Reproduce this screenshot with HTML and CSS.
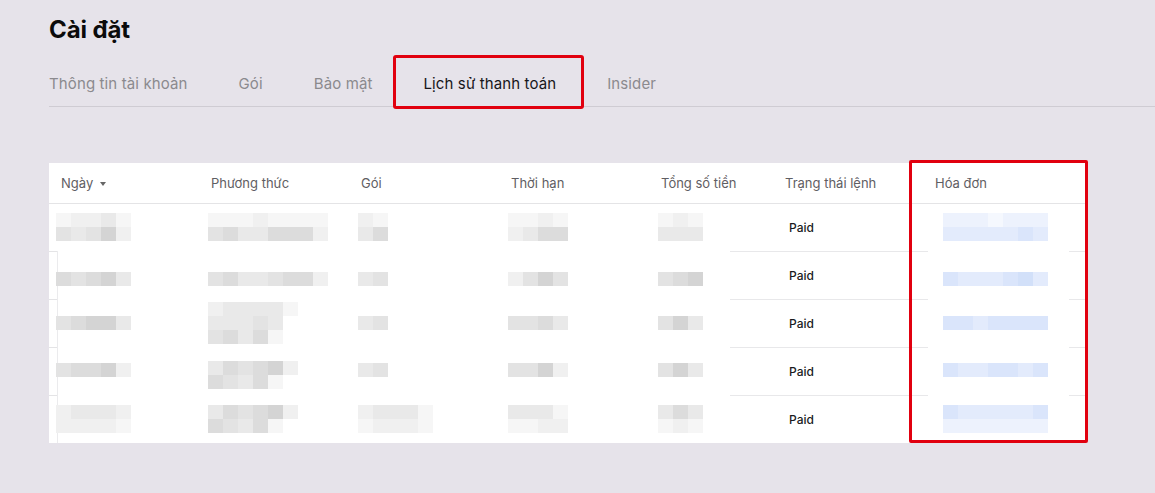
FILE: index.html
```html
<!DOCTYPE html>
<html lang="vi">
<head>
<meta charset="utf-8">
<title>Cài đặt</title>
<link rel="stylesheet" href="styles.css">
</head>
<body>
<main class="page">
  <h1 class="title">Cài đặt</h1>
  <nav class="tabs">
    <span class="tab">Thông tin tài khoản</span>
    <span class="tab">Gói</span>
    <span class="tab">Bảo mật</span>
    <span class="tab active">Lịch sử thanh toán</span>
    <span class="tab">Insider</span>
  </nav>

  <section class="table-wrap">
    <table class="history">
      <colgroup>
        <col class="w150"><col class="w150"><col class="w150"><col class="w150"><col class="w124"><col class="w150"><col class="w164">
      </colgroup>
      <thead>
        <tr>
          <th>Ngày <span class="caret"></span></th>
          <th>Phương thức</th>
          <th>Gói</th>
          <th>Thời hạn</th>
          <th>Tổng số tiền</th>
          <th>Trạng thái lệnh</th>
          <th class="inv-h">Hóa đơn</th>
        </tr>
      </thead>
      <tbody>
        <tr>
          <td class="c-date"><div class="mz m-date"><div class="mr"><i class="c1"></i><i class="c2"></i><i class="c2"></i><i class="c3"></i><i class="c1"></i></div><div class="mr"><i class="c4"></i><i class="c3"></i><i class="c4"></i><i class="c6"></i><i class="c2"></i></div></div></td>
          <td class="c-pay"><div class="mz"><div class="mr"><i class="c1"></i><i class="c1"></i><i class="c1"></i><i class="c2"></i><i class="c1"></i><i class="c1"></i><i class="c1"></i><i class="c1"></i></div><div class="mr"><i class="c4"></i><i class="c5"></i><i class="c3"></i><i class="c3"></i><i class="c5"></i><i class="c5"></i><i class="c5"></i><i class="c2"></i></div></div></td>
          <td class="c-plan"><div class="mz"><div class="mr"><i class="c2"></i><i class="c1"></i></div><div class="mr"><i class="c3"></i><i class="c5"></i></div></div></td>
          <td class="c-term"><div class="mz"><div class="mr"><i class="c1"></i><i class="c1"></i><i class="c2"></i><i class="c1"></i></div><div class="mr"><i class="c2"></i><i class="c3"></i><i class="c5"></i><i class="c5"></i></div></div></td>
          <td class="c-total"><div class="mz"><div class="mr"><i class="c1"></i><i class="c2"></i><i class="c1"></i></div><div class="mr"><i class="c3"></i><i class="c3"></i><i class="c3"></i></div></div></td>
          <td class="c-status">Paid</td>
          <td class="c-inv"><div class="mz m-inv"><div class="mr"><i class="b1"></i><i class="b1"></i><i class="b1"></i><i class="b0"></i><i class="b1"></i><i class="b1"></i><i class="b1"></i></div><div class="mr"><i class="b2"></i><i class="b2"></i><i class="b2"></i><i class="b2"></i><i class="b2"></i><i class="b3"></i><i class="b2"></i></div></div></td>
        </tr>
        <tr>
          <td class="c-date"><div class="mz m-date lower"><div class="mr"><i class="c5"></i><i class="c4"></i><i class="c5"></i><i class="c6"></i><i class="c3"></i></div></div></td>
          <td class="c-pay"><div class="mz lower"><div class="mr"><i class="c4"></i><i class="c5"></i><i class="c3"></i><i class="c3"></i><i class="c4"></i><i class="c5"></i><i class="c5"></i><i class="c2"></i></div></div></td>
          <td class="c-plan"><div class="mz lower"><div class="mr"><i class="c3"></i><i class="c4"></i></div></div></td>
          <td class="c-term"><div class="mz lower"><div class="mr"><i class="c2"></i><i class="c4"></i><i class="c6"></i><i class="c4"></i></div></div></td>
          <td class="c-total"><div class="mz lower"><div class="mr"><i class="c4"></i><i class="c5"></i><i class="c6"></i></div></div></td>
          <td class="c-status">Paid</td>
          <td class="c-inv"><div class="mz m-inv lower"><div class="mr"><i class="b3"></i><i class="b2"></i><i class="b2"></i><i class="b2"></i><i class="b3"></i><i class="b4"></i><i class="b2"></i></div></div></td>
        </tr>
        <tr>
          <td class="c-date"><div class="mz m-date"><div class="mr"><i class="c4"></i><i class="c5"></i><i class="c6"></i><i class="c6"></i><i class="c3"></i></div></div></td>
          <td class="c-pay"><div class="mz"><div class="mr"><i class="c2"></i><i class="c3"></i><i class="c3"></i><i class="c3"></i><i class="c3"></i><i class="c1"></i></div><div class="mr"><i class="c3"></i><i class="c3"></i><i class="c3"></i><i class="c4"></i><i class="c3"></i></div><div class="mr"><i class="c4"></i><i class="c5"></i><i class="c3"></i><i class="c5"></i><i class="c1"></i></div></div></td>
          <td class="c-plan"><div class="mz"><div class="mr"><i class="c3"></i><i class="c4"></i></div></div></td>
          <td class="c-term"><div class="mz"><div class="mr"><i class="c4"></i><i class="c4"></i><i class="c5"></i><i class="c3"></i></div></div></td>
          <td class="c-total"><div class="mz"><div class="mr"><i class="c4"></i><i class="c6"></i><i class="c3"></i></div></div></td>
          <td class="c-status">Paid</td>
          <td class="c-inv"><div class="mz m-inv"><div class="mr"><i class="b3"></i><i class="b3"></i><i class="b2"></i><i class="b3"></i><i class="b3"></i><i class="b3"></i><i class="b3"></i></div></div></td>
        </tr>
        <tr>
          <td class="c-date"><div class="mz m-date raise"><div class="mr"><i class="c4"></i><i class="c5"></i><i class="c5"></i><i class="c6"></i><i class="c2"></i></div></div></td>
          <td class="c-pay"><div class="mz lower"><div class="mr"><i class="c3"></i><i class="c5"></i><i class="c4"></i><i class="c5"></i><i class="c6"></i><i class="c2"></i></div><div class="mr"><i class="c5"></i><i class="c4"></i><i class="c3"></i><i class="c5"></i><i class="c1"></i></div></div></td>
          <td class="c-plan"><div class="mz raise"><div class="mr"><i class="c3"></i><i class="c4"></i></div></div></td>
          <td class="c-term"><div class="mz raise"><div class="mr"><i class="c4"></i><i class="c4"></i><i class="c6"></i><i class="c2"></i></div></div></td>
          <td class="c-total"><div class="mz raise"><div class="mr"><i class="c4"></i><i class="c6"></i><i class="c3"></i></div></div></td>
          <td class="c-status">Paid</td>
          <td class="c-inv"><div class="mz m-inv raise"><div class="mr"><i class="b3"></i><i class="b2"></i><i class="b2"></i><i class="b3"></i><i class="b3"></i><i class="b2"></i><i class="b3"></i></div></div></td>
        </tr>
        <tr>
          <td class="c-date"><div class="mz m-date"><div class="mr"><i class="c2"></i><i class="c3"></i><i class="c3"></i><i class="c3"></i><i class="c2"></i></div><div class="mr"><i class="c2"></i><i class="c2"></i><i class="c2"></i><i class="c2"></i><i class="c1"></i></div></div></td>
          <td class="c-pay"><div class="mz"><div class="mr"><i class="c3"></i><i class="c5"></i><i class="c4"></i><i class="c5"></i><i class="c6"></i><i class="c2"></i></div><div class="mr"><i class="c5"></i><i class="c4"></i><i class="c3"></i><i class="c5"></i><i class="c1"></i></div></div></td>
          <td class="c-plan"><div class="mz"><div class="mr"><i class="c2"></i><i class="c3"></i><i class="c3"></i><i class="c3"></i><i class="c1"></i></div><div class="mr"><i class="c1"></i><i class="c2"></i><i class="c2"></i><i class="c2"></i><i class="c1"></i></div></div></td>
          <td class="c-term"><div class="mz"><div class="mr"><i class="c3"></i><i class="c3"></i><i class="c3"></i><i class="c1"></i></div><div class="mr"><i class="c1"></i><i class="c1"></i><i class="c2"></i><i class="c2"></i></div></div></td>
          <td class="c-total"><div class="mz"><div class="mr"><i class="c3"></i><i class="c5"></i><i class="c3"></i></div><div class="mr"><i class="c1"></i><i class="c2"></i><i class="c1"></i></div></div></td>
          <td class="c-status">Paid</td>
          <td class="c-inv"><div class="mz m-inv"><div class="mr"><i class="b3"></i><i class="b2"></i><i class="b2"></i><i class="b2"></i><i class="b2"></i><i class="b2"></i><i class="b3"></i></div><div class="mr"><i class="b1"></i><i class="b1"></i><i class="b1"></i><i class="b1"></i><i class="b1"></i><i class="b1"></i><i class="b1"></i></div></div></td>
        </tr>
      </tbody>
    </table>
    <div class="col-highlight"></div>
  </section>
</main>
</body>
</html>
```

FILE: styles.css
```css
* { box-sizing: border-box; }

html, body {
  margin: 0;
  padding: 0;
  background: #e6e3ea;
}

body {
  font-family: Inter, "Noto Sans", "Liberation Sans", sans-serif;
  color: #111;
}

.page {
  padding: 15px 0 0 49px;
}

.title {
  margin: 0;
  font-size: 24px;
  line-height: 30px;
  font-weight: 700;
  color: #0b0b0b;
  letter-spacing: -0.1px;
}

.tabs {
  margin-top: 12px;
  height: 50px;
  display: flex;
  align-items: center;
  gap: 51px;
  border-bottom: 1px solid #cfccd3;
}

.tab {
  position: relative;
  font-size: 15px;
  line-height: 20px;
  letter-spacing: 0.12px;
  color: #8b8a8e;
  padding-top: 4px;
  white-space: nowrap;
}

.tab.active {
  color: #17161a;
}

.tab.active::after {
  content: "";
  position: absolute;
  left: -30px;
  right: -28px;
  top: -15px;
  bottom: -15px;
  border: 3px solid #e1000f;
  border-radius: 3px;
}

.table-wrap {
  position: relative;
  width: 1038px;
  margin-top: 56px;
  background: #fff;
}

.history {
  width: 1038px;
  border-collapse: collapse;
  table-layout: fixed;
}

.w150 { width: 150px; }
.w124 { width: 124px; }
.w164 { width: 164px; }

.history th {
  height: 40px;
  padding: 0 0 0 12px;
  text-align: left;
  font-size: 13px;
  font-weight: 400;
  color: #5f5e63;
  border-bottom: 1px solid #e4e4e6;
  white-space: nowrap;
}

.caret {
  display: inline-block;
  width: 0;
  height: 0;
  margin-left: 3px;
  vertical-align: 2px;
  border-left: 3px solid transparent;
  border-right: 3px solid transparent;
  border-top: 4px solid #666;
}

.history td {
  height: 48px;
  padding: 0;
  vertical-align: middle;
}

.history tbody tr + tr td.c-status {
  border-top: 1px solid #e8e8ea;
}

.history tbody tr + tr td.c-date {
  background: linear-gradient(#e4e4e6, #e4e4e6) left top / 8px 1px no-repeat,
              linear-gradient(#ebebed, #ebebed) 8px top / 1px 100% no-repeat;
}

.history tbody tr + tr td.c-total {
  background: linear-gradient(#e8e8ea, #e8e8ea) right top / 43px 1px no-repeat;
}

.history tbody tr + tr td.c-inv {
  background: linear-gradient(#e8e8ea, #e8e8ea) left top / 5px 1px no-repeat,
              linear-gradient(#e8e8ea, #e8e8ea) right top / 18px 1px no-repeat;
}

.c-status {
  padding-left: 16px !important;
  font-size: 12px;
  font-weight: 500;
  color: #1b1b1e;
}

.mz {
  display: flex;
  flex-direction: column;
  margin-left: 9px;
}

.mz.m-date { margin-left: 7px; }
.mz.m-inv { margin-left: 20px; }
.mz.lower { transform: translateY(4px); }
.mz.raise { transform: translateY(-1px); }

.mr {
  display: flex;
}

.mr i {
  display: block;
  width: 15px;
  height: 14px;
}

.c1 { background: #f6f6f6; }
.c2 { background: #f0f0f0; }
.c3 { background: #e9e9e9; }
.c4 { background: #e3e3e3; }
.c5 { background: #dcdcdc; }
.c6 { background: #d4d4d4; }

.b0 { background: #f5f8fe; }
.b1 { background: #edf2fd; }
.b2 { background: #e3ebfc; }
.b3 { background: #dae5fb; }
.b4 { background: #d2e0f9; }

.col-highlight {
  position: absolute;
  left: 860px;
  right: -1px;
  top: -3px;
  bottom: 0;
  border: 3px solid #e1000f;
  border-radius: 2px;
  pointer-events: none;
}
```
